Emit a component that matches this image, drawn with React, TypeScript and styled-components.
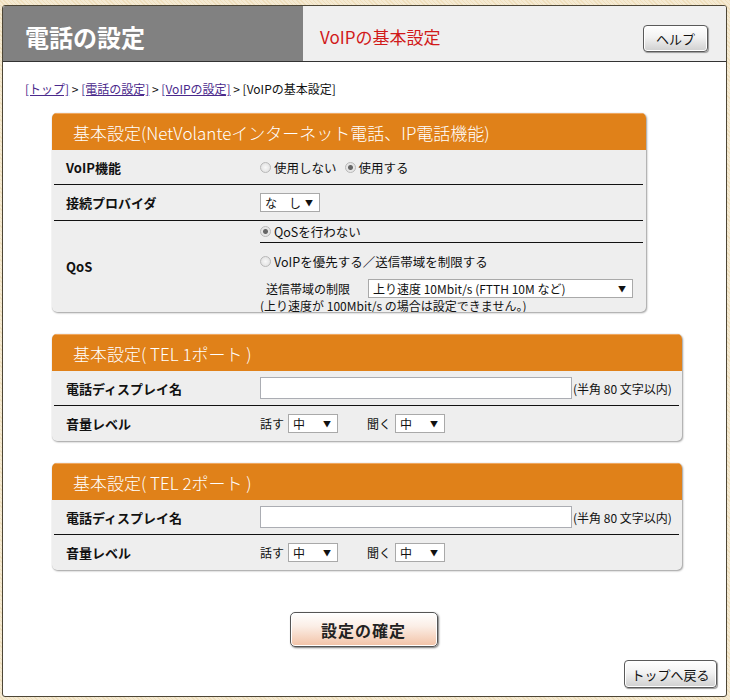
import React from 'react';
import styled, { createGlobalStyle } from 'styled-components';

const GlobalStyle = createGlobalStyle`
  html, body {
    margin: 0;
    padding: 0;
    background: #f3e7cc;
  }
  body {
    font-family: "Noto Sans CJK JP", "Noto Sans", "Liberation Sans", sans-serif;
    font-size: 12px;
    color: #111;
  }
`;

const Page = styled.div`
  width: 730px;
  height: 700px;
  box-sizing: border-box;
  padding: 5px 3px 3px 2px;
  background: repeating-linear-gradient(45deg, #f5ead2 0 2px, #efdfbd 2px 3px);
`;

const Frame = styled.div`
  height: 692px;
  box-sizing: border-box;
  background: #fff;
  border: 1px solid #4d4636;
  border-radius: 3px;
  display: flex;
  flex-direction: column;
  overflow: hidden;
`;

const Header = styled.div`
  display: flex;
  height: 55px;
  border-bottom: 1px solid #333;
  background: #efefef;
`;

const TitleBlock = styled.div`
  width: 300px;
  background: #818181;
  color: #fff;
  font-size: 24px;
  font-weight: 700;
  display: flex;
  align-items: center;
  padding-left: 22px;
  box-sizing: border-box;
  padding-top: 6px;
`;

const SubTitle = styled.div`
  flex: 1;
  color: #d11a1a;
  font-size: 17px;
  display: flex;
  align-items: center;
  padding-left: 17px;
  padding-top: 6px;
`;

const GreyButton = styled.button<{ $w: number; $h: number }>`
  width: ${(p) => p.$w}px;
  height: ${(p) => p.$h}px;
  padding: 0;
  font-family: inherit;
  font-size: 13px;
  color: #111;
  border: 1px solid #5a5a5a;
  border-radius: 4px;
  background: linear-gradient(#ffffff, #f2f2f2 45%, #cfcfcf);
  box-shadow: 1px 1px 1px #9a9a9a, inset 0 0 0 1px #fff;
  cursor: pointer;
`;

const HelpWrap = styled.div`
  display: flex;
  align-items: flex-end;
  padding: 0 18px 9px 0;
`;

const Content = styled.div`
  flex: 1;
  display: flex;
  flex-direction: column;
  padding: 19px 0 0 0;
`;

const Breadcrumb = styled.div`
  padding-left: 22px;
  line-height: 16px;
  font-size: 12px;
  margin-bottom: 16px;
`;

const Crumb = styled.a`
  color: #4b2a8c;
  text-decoration: underline;
`;

const Section = styled.div<{ $w: number }>`
  width: ${(p) => p.$w}px;
  margin: 0 0 22px 49px;
  background: #eeeeee;
  border-radius: 5px;
  box-shadow: 1px 1px 2px #9c9c9c, 0 0 1px #b5b5b5;
  overflow: hidden;
`;

const SectionHead = styled.div`
  height: 36px;
  background: #e08119;
  border-top: 1px solid #f0a860;
  color: #fff;
  font-size: 17px;
  font-weight: 300;
  display: flex;
  align-items: center;
  padding-left: 21px;
`;

const Row = styled.div<{ $h: number; $last?: boolean }>`
  display: grid;
  grid-template-columns: 204px 1fr;
  min-height: ${(p) => p.$h}px;
  align-items: center;
  margin: 0 3px 0 2px;
  border-bottom: ${(p) => (p.$last ? 'none' : '1px solid #111')};
`;

const Label = styled.div`
  font-weight: 700;
  font-size: 13px;
  padding-left: 12px;
`;

const Value = styled.div<{ $gap?: number }>`
  display: flex;
  align-items: center;
  gap: ${(p) => p.$gap ?? 4}px;
  padding-left: 2px;
`;

const Radio = styled.span<{ $on?: boolean }>`
  width: 11px;
  height: 11px;
  border-radius: 50%;
  box-sizing: border-box;
  border: 1px solid #b8b8b8;
  background: ${(p) =>
    p.$on
      ? 'radial-gradient(circle, #666 0 2px, #e6e6e6 3px)'
      : 'radial-gradient(circle, #f8f8f8, #dcdcdc)'};
  display: inline-block;
  margin-right: 3px;
`;

const RadioLabel = styled.label`
  display: inline-flex;
  align-items: center;
  margin-right: 4px;
  font-size: 12.5px;
`;

const Select = styled.div<{ $w: number }>`
  width: ${(p) => p.$w}px;
  height: 19px;
  box-sizing: border-box;
  border: 1px solid #a9a9a9;
  background: #fff;
  display: flex;
  align-items: center;
  justify-content: space-between;
  padding: 0 6px 0 4px;
  font-size: 12px;
`;

const Arrow = styled.span`
  font-size: 8px;
`;

const QosCell = styled.div`
  display: flex;
  flex-direction: column;
  padding-left: 2px;
`;

const QosLine = styled.div<{ $border?: boolean; $h: number }>`
  height: ${(p) => p.$h}px;
  display: flex;
  align-items: center;
  gap: 4px;
  border-bottom: ${(p) => (p.$border ? '1px solid #111' : 'none')};
`;

const LimitLabel = styled.span`
  margin: 0 14px 0 6px;
`;

const TextInput = styled.input`
  width: 312px;
  height: 22px;
  box-sizing: border-box;
  border: 1px solid #abadb3;
  background: #fff;
  margin: 0;
`;

const Note = styled.span`
  font-size: 12px;
`;

const VolLabel = styled.span<{ $gap: number }>`
  margin-left: ${(p) => p.$gap}px;
`;

const SubmitWrap = styled.div`
  display: flex;
  justify-content: center;
  margin: 20px 0 0 -2px;
`;

const SubmitButton = styled.button`
  width: 148px;
  height: 35px;
  font-family: inherit;
  font-size: 16px;
  font-weight: 700;
  color: #222;
  letter-spacing: 1px;
  border: 1px solid #555;
  border-radius: 5px;
  background: linear-gradient(#ffffff, #fbeee6 40%, #f2c2a6);
  box-shadow: 1px 1px 2px #777, inset 0 0 0 1px #fff;
  cursor: pointer;
`;

const BackWrap = styled.div`
  display: flex;
  justify-content: flex-end;
  padding-right: 9px;
  margin-top: 13px;
`;

const VolumeRow: React.FC = () => (
  <Row $h={35} $last>
    <Label>音量レベル</Label>
    <Value>
      <span>話す</span>
      <Select $w={50}>
        <span>中</span>
        <Arrow>▼</Arrow>
      </Select>
      <VolLabel $gap={25}>聞く</VolLabel>
      <Select $w={50}>
        <span>中</span>
        <Arrow>▼</Arrow>
      </Select>
    </Value>
  </Row>
);

const PortSection: React.FC<{ port: number }> = ({ port }) => (
  <Section $w={630}>
    <SectionHead>基本設定( TEL {port}ポート )</SectionHead>
    <Row $h={34}>
      <Label>電話ディスプレイ名</Label>
      <Value $gap={1}>
        <TextInput type="text" />
        <Note>(半角 80 文字以内)</Note>
      </Value>
    </Row>
    <VolumeRow />
  </Section>
);

const App: React.FC = () => {
  return (
    <Page>
      <GlobalStyle />
      <Frame>
        <Header>
          <TitleBlock>電話の設定</TitleBlock>
          <SubTitle>VoIPの基本設定</SubTitle>
          <HelpWrap>
            <GreyButton $w={65} $h={27}>ヘルプ</GreyButton>
          </HelpWrap>
        </Header>

        <Content>
          <Breadcrumb>
            <Crumb href="#">[トップ]</Crumb> &gt; <Crumb href="#">[電話の設定]</Crumb> &gt;{' '}
            <Crumb href="#">[VoIPの設定]</Crumb> &gt; [VoIPの基本設定]
          </Breadcrumb>

          <Section $w={594}>
            <SectionHead>基本設定(NetVolanteインターネット電話、IP電話機能)</SectionHead>
            <Row $h={34}>
              <Label>VoIP機能</Label>
              <Value>
                <RadioLabel>
                  <Radio />
                  使用しない
                </RadioLabel>
                <RadioLabel>
                  <Radio $on />
                  使用する
                </RadioLabel>
              </Value>
            </Row>
            <Row $h={35}>
              <Label>接続プロバイダ</Label>
              <Value>
                <Select $w={60}>
                  <span>な　し</span>
                  <Arrow>▼</Arrow>
                </Select>
              </Value>
            </Row>
            <Row $h={90} $last>
              <Label>QoS</Label>
              <QosCell>
                <QosLine $h={21} $border>
                  <RadioLabel>
                    <Radio $on />
                    QoSを行わない
                  </RadioLabel>
                </QosLine>
                <QosLine $h={36}>
                  <RadioLabel>
                    <Radio />
                    VoIPを優先する／送信帯域を制限する
                  </RadioLabel>
                </QosLine>
                <QosLine $h={19}>
                  <LimitLabel>送信帯域の制限</LimitLabel>
                  <Select $w={265}>
                    <span>上り速度 10Mbit/s (FTTH 10M など)</span>
                    <Arrow>▼</Arrow>
                  </Select>
                </QosLine>
                <QosLine $h={14}>
                  <span>(上り速度が 100Mbit/s の場合は設定できません。)</span>
                </QosLine>
              </QosCell>
            </Row>
          </Section>

          <PortSection port={1} />
          <PortSection port={2} />

          <SubmitWrap>
            <SubmitButton>設定の確定</SubmitButton>
          </SubmitWrap>
          <BackWrap>
            <GreyButton $w={93} $h={28}>トップへ戻る</GreyButton>
          </BackWrap>
        </Content>
      </Frame>
    </Page>
  );
};

export default App;
